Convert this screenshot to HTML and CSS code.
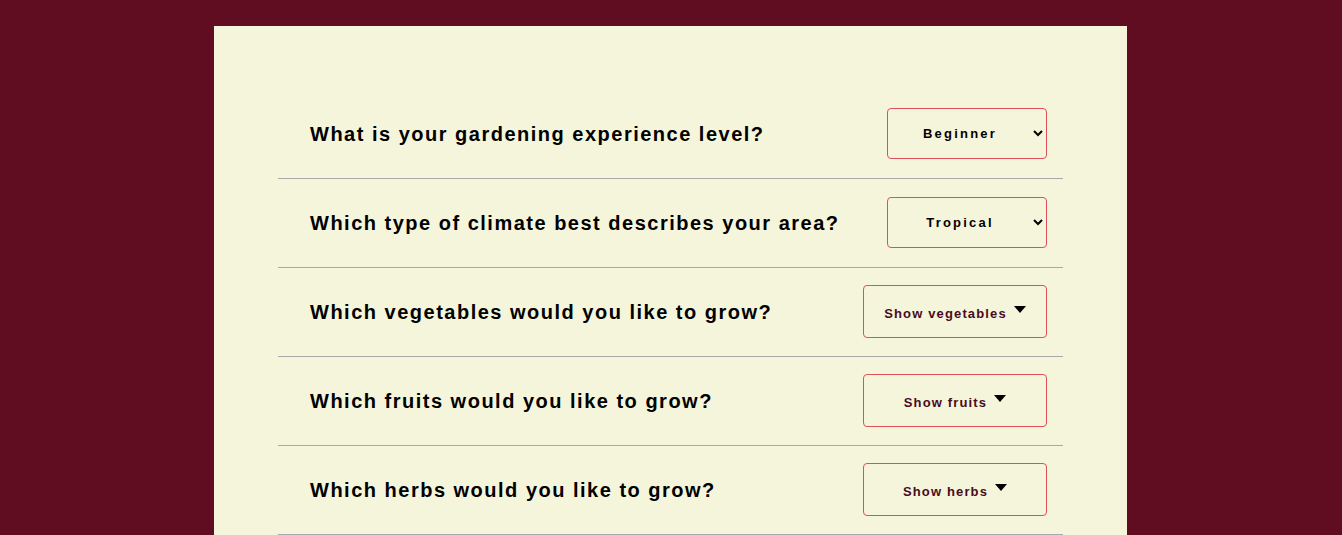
FILE: index.html
```html
<!DOCTYPE html>
<html>
<head>
<meta charset="utf-8">
<link rel="stylesheet" href="styles.css">
</head>
<body>
<main class="card">
  <div class="row">
    <h2 class="question">What is your gardening experience level?</h2>
    <select class="choice">
      <option>Beginner</option>
      <option>Intermediate</option>
      <option>Advanced</option>
    </select>
  </div>
  <div class="row">
    <h2 class="question">Which type of climate best describes your area?</h2>
    <select class="choice">
      <option>Tropical</option>
      <option>Temperate</option>
      <option>Arid</option>
    </select>
  </div>
  <div class="row">
    <h2 class="question">Which vegetables would you like to grow?</h2>
    <button class="toggle">Show vegetables <svg class="caret" width="12" height="8" viewBox="0 0 12 8"><path d="M0 0H12L6 7Z" fill="#000"/></svg></button>
  </div>
  <div class="row">
    <h2 class="question">Which fruits would you like to grow?</h2>
    <button class="toggle">Show fruits <svg class="caret" width="12" height="8" viewBox="0 0 12 8"><path d="M0 0H12L6 7Z" fill="#000"/></svg></button>
  </div>
  <div class="row">
    <h2 class="question">Which herbs would you like to grow?</h2>
    <button class="toggle">Show herbs <svg class="caret" width="12" height="8" viewBox="0 0 12 8"><path d="M0 0H12L6 7Z" fill="#000"/></svg></button>
  </div>
</main>
</body>
</html>
```
FILE: styles.css
```css
html, body {
  margin: 0;
  padding: 0;
}
body {
  background: #600d22;
  font-family: "Liberation Sans", Arial, sans-serif;
  padding-top: 26px;
}
.card {
  width: 913px;
  margin-left: 214px;
  background: #f5f5dc;
  padding: 64px 64px 40px;
  box-sizing: border-box;
  min-height: 600px;
}
.row {
  display: flex;
  align-items: center;
  justify-content: space-between;
  height: 89px;
  box-sizing: border-box;
  border-bottom: 1px solid #a9a9a9;
  padding: 0 16px 0 32px;
}
.question {
  margin: 0;
  font-size: 20px;
  font-weight: bold;
  letter-spacing: 1.5px;
  color: #000;
}
.choice {
  width: 160px;
  height: 51px;
  margin-bottom: 2px;
  background: #f5f5dc;
  border: 1px solid #e0505a;
  border-radius: 4px;
  font-family: "Liberation Sans", Arial, sans-serif;
  font-size: 13px;
  font-weight: bold;
  letter-spacing: 2.2px;
  color: #000;
  text-align: center;
  text-align-last: center;
  padding: 0 4px 0 2px;
}
.toggle {
  width: 184px;
  height: 53px;
  margin-bottom: 2px;
  background: #f5f5dc;
  border: 1px solid #e0505a;
  border-radius: 4px;
  font-family: "Liberation Sans", Arial, sans-serif;
  font-size: 13px;
  font-weight: bold;
  letter-spacing: 1.15px;
  color: #4a0a1c;
  display: flex;
  align-items: center;
  justify-content: center;
  gap: 7px;
  padding: 5px 0 0;
}
.caret {
  margin-top: -8px;
}
```
